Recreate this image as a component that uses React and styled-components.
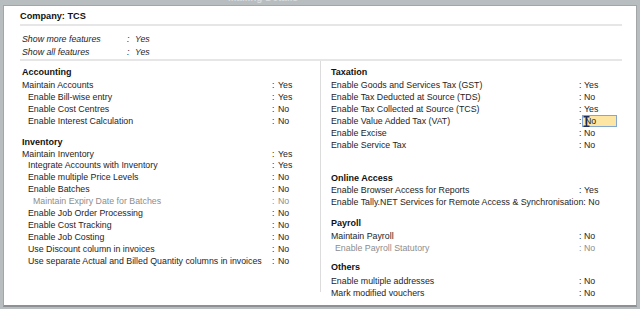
import React from 'react'
import styled, { createGlobalStyle } from 'styled-components'

const GlobalStyle = createGlobalStyle`
  html, body {
    margin: 0;
    padding: 0;
    background: #b8bdc0;
    font-family: "Liberation Sans", Arial, sans-serif;
  }
  #root {
    width: 640px;
    height: 309px;
    overflow: hidden;
  }
`

const accounting = [
  { label: 'Maintain Accounts', value: 'Yes', indent: 0 },
  { label: 'Enable Bill-wise entry', value: 'Yes', indent: 6 },
  { label: 'Enable Cost Centres', value: 'No', indent: 6 },
  { label: 'Enable Interest Calculation', value: 'No', indent: 6 },
]

const inventory = [
  { label: 'Maintain Inventory', value: 'Yes', indent: 0 },
  { label: 'Integrate Accounts with Inventory', value: 'Yes', indent: 6 },
  { label: 'Enable multiple Price Levels', value: 'No', indent: 6 },
  { label: 'Enable Batches', value: 'No', indent: 6 },
  { label: 'Maintain Expiry Date for Batches', value: 'No', indent: 11, muted: true },
  { label: 'Enable Job Order Processing', value: 'No', indent: 6 },
  { label: 'Enable Cost Tracking', value: 'No', indent: 6 },
  { label: 'Enable Job Costing', value: 'No', indent: 6 },
  { label: 'Use Discount column in invoices', value: 'No', indent: 6 },
  { label: 'Use separate Actual and Billed Quantity columns in invoices', value: 'No', indent: 6 },
]

const taxation = [
  { label: 'Enable Goods and Services Tax (GST)', value: 'Yes' },
  { label: 'Enable Tax Deducted at Source (TDS)', value: 'No' },
  { label: 'Enable Tax Collected at Source (TCS)', value: 'Yes' },
  { label: 'Enable Value Added Tax (VAT)', value: 'No', active: true },
  { label: 'Enable Excise', value: 'No' },
  { label: 'Enable Service Tax', value: 'No' },
]

const onlineAccess = [
  { label: 'Enable Browser Access for Reports', value: 'Yes' },
  { label: 'Enable Tally.NET Services for Remote Access & Synchronisation', value: 'No' },
]

const payroll = [
  { label: 'Maintain Payroll', value: 'No' },
  { label: 'Enable Payroll Statutory', value: 'No', indent: 4, muted: true },
]

const others = [
  { label: 'Enable multiple addresses', value: 'No' },
  { label: 'Mark modified vouchers', value: 'No' },
]

const leftSections = [
  { title: 'Accounting', rows: accounting, mt: 4.5, hmb: 1.5, lh: 12 },
  { title: 'Inventory', rows: inventory, mt: 8.5, hmb: 1, lh: 11.9 },
]

const rightSections = [
  { title: 'Taxation', rows: taxation, mt: 4.5, hmb: 1.8, lh: 12 },
  { title: 'Online Access', rows: onlineAccess, mt: 20.4, hmb: 0.6, lh: 12 },
  { title: 'Payroll', rows: payroll, mt: 9, hmb: 0.4, lh: 12 },
  { title: 'Others', rows: others, mt: 7, hmb: 2.6, lh: 12 },
]

// text cursor sitting on the focused value
const IBeam = () => (
  <Cursor width="7" height="11" viewBox="0 0 7 11">
    <path d="M0.5 0.8 H6.5 M3.5 0.8 V10.2 M0.5 10.2 H6.5" stroke="#1c2a5c" strokeWidth="1.6" fill="none" />
  </Cursor>
)

const Section = ({ title, rows, mt, hmb, lh, labelW, colonW }) => (
  <SectionBox $mt={mt}>
    <SectionTitle $mb={hmb}>{title}</SectionTitle>
    {rows.map((r) => (
      <Row key={r.label} $lh={lh} $labelW={labelW} $colonW={colonW} $muted={r.muted}>
        <Label $indent={r.indent || 0}>{r.label}</Label>
        <span>:</span>
        {r.active ? (
          <ActiveValue>
            {r.value}
            <IBeam />
          </ActiveValue>
        ) : (
          <span>{r.value}</span>
        )}
      </Row>
    ))}
  </SectionBox>
)

const App = () => {
  return (
    <>
      <GlobalStyle />
      <TopStrip>
        <Caption>Mailing Details</Caption>
      </TopStrip>
      <Window>
        <Body>
          <CompanyTitle>Company: TCS</CompanyTitle>
          <Rule />
          <Features>
            <FeatureRow>
              <span>Show more features</span>
              <span>:</span>
              <span>Yes</span>
            </FeatureRow>
            <FeatureRow>
              <span>Show all features</span>
              <span>:</span>
              <span>Yes</span>
            </FeatureRow>
          </Features>
          <Rule />
          <Columns>
            <LeftColumn>
              {leftSections.map((s) => (
                <Section key={s.title} {...s} labelW={250} colonW={6} />
              ))}
            </LeftColumn>
            <RightColumn>
              {rightSections.map((s) => (
                <Section key={s.title} {...s} labelW={248} colonW={5} />
              ))}
            </RightColumn>
          </Columns>
        </Body>
      </Window>
    </>
  )
}

const TopStrip = styled.div`
  height: 5px;
  overflow: hidden;
  padding-left: 228px;
`

const Caption = styled.div`
  margin-top: -8px;
  font-size: 10px;
  line-height: 12px;
  font-weight: bold;
  color: #d6dadc;
`

const Window = styled.div`
  box-sizing: border-box;
  width: 634px;
  height: 302px;
  margin-left: 3px;
  background: #fff;
  border: 1px solid #a2a6a9;
  border-bottom: 2px solid #8d9194;
`

const Body = styled.div`
  padding: 0 14px 0 16px;
  color: #1e1e1e;
  font-size: 8.8px;
`

const CompanyTitle = styled.div`
  padding: 4px 0 2px 0;
  line-height: 12px;
  font-weight: bold;
  font-size: 9.2px;
  color: #111;
`

const Rule = styled.div`
  height: 2px;
  background: #e6e6e6;
`

const Features = styled.div`
  padding: 7px 0 1px 2px;
  font-style: italic;
`

const FeatureRow = styled.div`
  display: grid;
  grid-template-columns: 105px 8px auto;
  line-height: 12.5px;
  white-space: nowrap;
`

const Columns = styled.div`
  display: grid;
  grid-template-columns: 301px 1fr;
  align-items: start;
`

const LeftColumn = styled.div`
  padding: 0 0 24.5px 2px;
  border-right: 1px solid #dcdcdc;
`

const RightColumn = styled.div`
  padding-left: 10px;
`

const SectionBox = styled.div`
  margin-top: ${({ $mt }) => $mt}px;
`

const SectionTitle = styled.div`
  line-height: 12px;
  font-size: 9px;
  font-weight: bold;
  color: #111;
  margin-bottom: ${({ $mb }) => $mb}px;
`

const Row = styled.div`
  display: grid;
  grid-template-columns: minmax(${({ $labelW }) => $labelW}px, max-content) ${({ $colonW }) => $colonW}px auto;
  line-height: ${({ $lh }) => $lh}px;
  white-space: nowrap;
  color: ${({ $muted }) => ($muted ? '#8d8d8d' : '#1e1e1e')};
`

const Label = styled.span`
  padding-left: ${({ $indent }) => $indent}px;
`

const ActiveValue = styled.span`
  position: relative;
  box-sizing: border-box;
  width: 35px;
  margin-left: -2px;
  padding-left: 2px;
  background: #fde6a3;
  border: 1px solid #84a7d2;
  line-height: 10px;
`

const Cursor = styled.svg`
  position: absolute;
  left: 0px;
  top: 0px;
`

export default App
